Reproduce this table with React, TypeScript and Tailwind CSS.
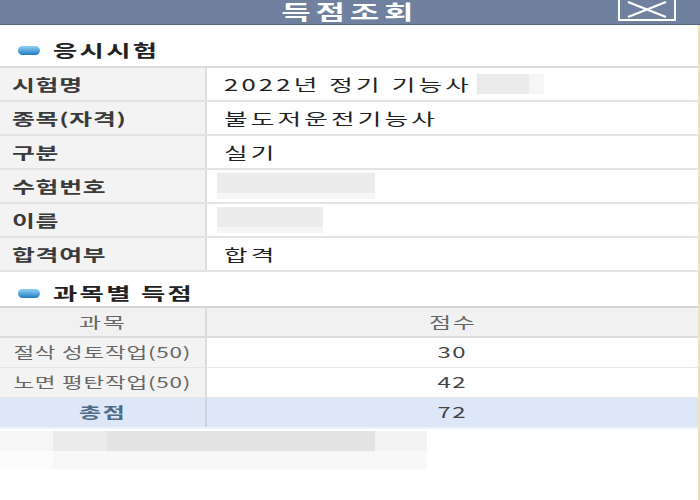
const FONT = { fontFamily: '"Noto Sans CJK KR", "Noto Sans", sans-serif' };

const infoRows: { label: string; value?: string; blur?: number }[] = [
  { label: "시험명", value: "2022년 정기 기능사" },
  { label: "종목(자격)", value: "불도저운전기능사" },
  { label: "구분", value: "실기" },
  { label: "수험번호", blur: 158 },
  { label: "이름", blur: 106 },
  { label: "합격여부", value: "합격" },
];

const scores = [
  { subject: "절삭 성토작업(50)", score: "30" },
  { subject: "노면 평탄작업(50)", score: "42" },
];

// the capture is stretched sideways, so text is widened with scale-x
function Bullet() {
  return (
    <span className="inline-block h-[9px] w-[22px] rounded-full bg-gradient-to-b from-[#8ed2f4] to-[#1b7cc2]" />
  );
}

function SectionTitle({ children }: { children: string }) {
  return (
    <div className="flex h-[26px] items-center gap-[13px] pl-[18px]">
      <Bullet />
      <span className="inline-block origin-left scale-x-[1.55] whitespace-nowrap text-[17px] font-bold leading-[26px] tracking-[1.5px] text-[#222]">
        {children}
      </span>
    </div>
  );
}

export default function App() {
  return (
    <div className="h-[500px] w-[700px] overflow-hidden bg-white" style={FONT}>
      {/* Header */}
      <div className="relative flex h-[25px] items-center justify-center border-b border-[#56667e] bg-[#6f819e]">
        <span className="inline-block scale-x-[1.6] whitespace-nowrap text-[20px] font-bold leading-[24px] tracking-[3px] text-white">
          득점조회
        </span>
        <div className="absolute right-[24px] top-0 flex h-[21px] w-[58px] items-center justify-center border-2 border-t-0 border-white">
          <svg width="46" height="17" viewBox="0 0 46 17">
            <path d="M4 1 L42 16 M42 1 L4 16" stroke="white" strokeWidth="2.2" />
          </svg>
        </div>
      </div>

      <div className="border-r-2 border-[#efe2b8]">
        {/* 응시시험 */}
        <div className="pt-[12px] pb-[3px]">
          <SectionTitle>응시시험</SectionTitle>
        </div>
        <div className="border-t-2 border-[#dcdcdc]">
          {infoRows.map((r) => (
            <div key={r.label} className="flex h-[34px] border-b-2 border-[#e4e4e4]">
              <div className="flex w-[207px] items-center border-r-2 border-[#dcdcdc] bg-[#f3f3f3] pl-[12px]">
                <span className="inline-block origin-left scale-x-[1.55] whitespace-nowrap text-[16px] font-semibold tracking-[0.5px] text-[#3a3a3a]">
                  {r.label}
                </span>
              </div>
              <div className="flex flex-1 items-center pl-[17px]">
                {r.value && (
                  <span className="flex origin-left scale-x-[1.6] items-center whitespace-nowrap text-[16px] tracking-[2px] text-[#222]">
                    {r.value}
                    {r.label === "시험명" && (
                      <>
                        <span className="ml-[3px] inline-block h-[20px] w-[33px] bg-[#ebebeb]" />
                        <span className="inline-block h-[20px] w-[9px] bg-[#f6f6f6]" />
                      </>
                    )}
                  </span>
                )}
                {r.blur && (
                  <span className="-ml-[7px] flex h-[26px] flex-col" style={{ width: r.blur }}>
                    <span className="h-[20px] bg-[#ececec]" />
                    <span className="h-[6px] bg-[#f6f6f6]" />
                  </span>
                )}
              </div>
            </div>
          ))}
        </div>

        {/* 과목별 득점 */}
        <div className="pt-[8px]">
          <SectionTitle>과목별 득점</SectionTitle>
        </div>
        <div className="border-t-2 border-[#d4d4d4] text-center">
          <div className="flex h-[30px] border-b-2 border-[#dcdcdc] bg-[#f1f1f1] text-[15px] tracking-[1px] text-[#666]">
            <div className="flex w-[207px] items-center justify-center border-r-2 border-[#dcdcdc]">
              <span className="inline-block scale-x-[1.6]">과목</span>
            </div>
            <div className="flex flex-1 items-center justify-center">
              <span className="inline-block scale-x-[1.6]">점수</span>
            </div>
          </div>
          {scores.map((s) => (
            <div key={s.subject} className="flex h-[30px] border-b border-[#e6e6e6]">
              <div className="flex w-[207px] items-center justify-center border-r-2 border-[#dcdcdc] bg-[#f3f3f3] text-[15px] tracking-[0.5px] text-[#666]">
                <span className="inline-block scale-x-[1.5] whitespace-nowrap">{s.subject}</span>
              </div>
              <div className="flex flex-1 items-center justify-center text-[15px] tracking-[1px] text-[#444]">
                <span className="inline-block scale-x-[1.6]">{s.score}</span>
              </div>
            </div>
          ))}
          <div className="flex h-[31px] border-b-2 border-[#eef2fa] bg-[#dde7f8]">
            <div className="flex w-[207px] items-center justify-center border-r-2 border-[#cdd3dc] text-[15px] font-bold tracking-[1px] text-[#4d6b86]">
              <span className="inline-block scale-x-[1.6]">총점</span>
            </div>
            <div className="flex flex-1 items-center justify-center text-[15px] tracking-[1px] text-[#444]">
              <span className="inline-block scale-x-[1.6]">72</span>
            </div>
          </div>
        </div>

        {/* blurred footer */}
        <div className="mt-[2px] flex h-[20px]">
          <div className="w-[53px] bg-[#f6f6f6]" />
          <div className="w-[54px] bg-[#ebebeb]" />
          <div className="w-[268px] bg-[#e3e3e3]" />
          <div className="w-[52px] bg-[#f3f3f3]" />
        </div>
        <div className="flex h-[18px]">
          <div className="w-[53px] bg-[#fcfcfc]" />
          <div className="w-[374px] bg-[#f8f8f8]" />
        </div>
        <div className="h-[40px]" />
      </div>
    </div>
  );
}
